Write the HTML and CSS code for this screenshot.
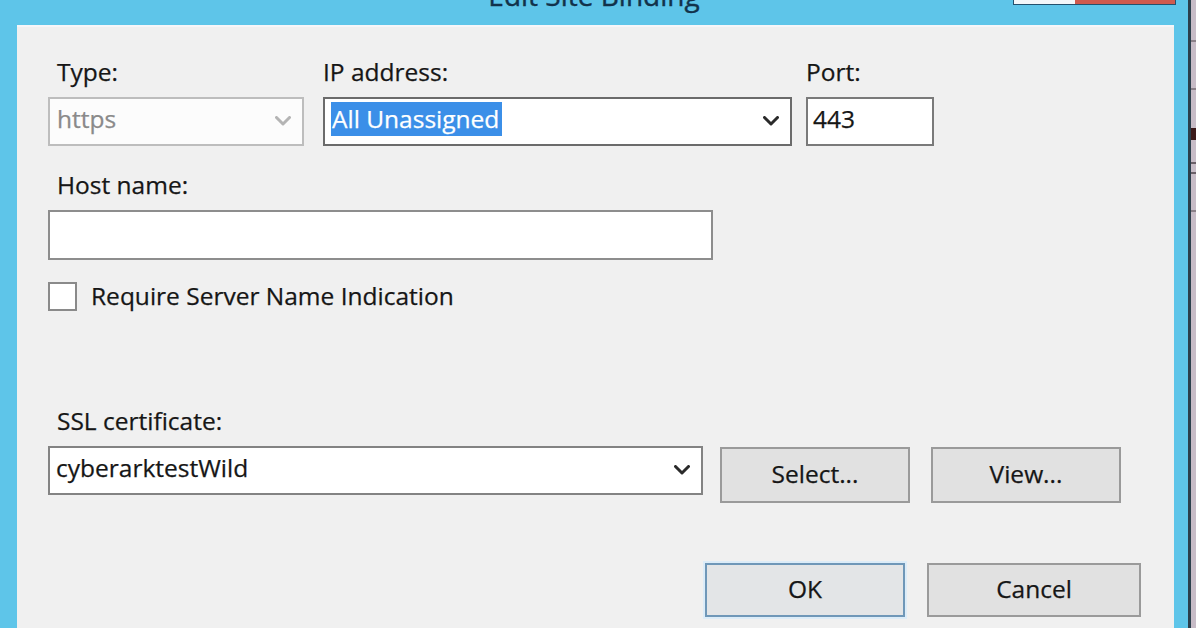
FILE: index.html
```html
<!DOCTYPE html>
<html lang="en">
<head>
<meta charset="utf-8">
<title>Edit Site Binding</title>
<link rel="stylesheet" href="styles.css">
</head>
<body>
<div class="screen">
  <div class="window">
    <div class="titlebar">
      <div class="tb-spacer"></div>
      <div class="title">Edit Site Binding</div>
      <div class="caption">
        <span class="cap-btn cap-max"></span>
        <span class="cap-btn cap-close"></span>
      </div>
    </div>
    <div class="frame-body">
      <div class="panel">
        <div class="row-top">
          <div class="field f-type">
            <div class="lbl indent">Type:</div>
            <div class="combo disabled">
              <span class="val">https</span>
              <svg class="chev" viewBox="0 0 16 10" width="16" height="10"><polyline points="1.5,1.5 8,8 14.5,1.5"/></svg>
            </div>
          </div>
          <div class="field f-ip">
            <div class="lbl">IP address:</div>
            <div class="combo focus">
              <span class="val"><span class="sel">All Unassigned</span></span>
              <svg class="chev" viewBox="0 0 16 10" width="16" height="10"><polyline points="1.5,1.5 8,8 14.5,1.5"/></svg>
            </div>
          </div>
          <div class="field f-port">
            <div class="lbl">Port:</div>
            <div class="textbox port"><span class="val">443</span></div>
          </div>
        </div>

        <div class="field f-host">
          <div class="lbl indent">Host name:</div>
          <div class="textbox host"></div>
        </div>

        <div class="check-row">
          <span class="checkbox"></span>
          <span class="check-label">Require Server Name Indication</span>
        </div>

        <div class="field f-ssl">
          <div class="lbl indent">SSL certificate:</div>
          <div class="ssl-row">
            <div class="combo ssl">
              <span class="val">cyberarktestWild</span>
              <svg class="chev" viewBox="0 0 16 10" width="16" height="10"><polyline points="1.5,1.5 8,8 14.5,1.5"/></svg>
            </div>
            <button class="btn btn-select">Select...</button>
            <button class="btn btn-view">View...</button>
          </div>
        </div>

        <div class="footer">
          <button class="btn btn-ok">OK</button>
          <button class="btn btn-cancel">Cancel</button>
        </div>
      </div>
    </div>
  </div>
  <div class="edge"></div>
  <div class="behind"></div>
</div>
</body>
</html>
```

FILE: styles.css
```css
* { box-sizing: border-box; }

html, body {
  margin: 0;
  padding: 0;
  width: 1196px;
  height: 628px;
  overflow: hidden;
  font-family: "Open Sans", "Noto Sans", sans-serif;
  font-size: 24.5px;
  color: #161616;
}

.screen {
  display: flex;
  width: 1196px;
  height: 628px;
}

.window {
  flex: 0 0 1188px;
  display: flex;
  flex-direction: column;
  background: #5ec5e9;
}

.titlebar {
  height: 25px;
  flex: 0 0 25px;
  overflow: hidden;
  display: grid;
  grid-template-columns: 1fr auto 1fr;
  align-items: start;
}

.title {
  font-size: 28px;
  line-height: 28px;
  margin-top: -19px;
  color: #12324b;
  -webkit-text-stroke: 0.4px #12324b;
  white-space: nowrap;
}

.caption {
  justify-self: end;
  margin-right: 12px;
  display: flex;
}

.cap-btn {
  display: block;
  height: 5px;
  border-bottom: 1px solid #24516e;
}

.cap-max {
  width: 62px;
  background: #f3f7fa;
  border-left: 1px solid #24516e;
}

.cap-close {
  width: 101px;
  background: #cf5a4e;
  border-right: 1px solid #24516e;
}

.frame-body {
  flex: 1;
  display: flex;
  padding: 0 14px 0 17px;
}

.panel {
  flex: 1;
  background: #f0f0f0;
  border-top: 2px solid #f6f6f9;
  padding: 30px 0 0 31px;
  display: flex;
  flex-direction: column;
  align-items: flex-start;
  -webkit-text-stroke: 0.25px currentColor;
}

.row-top {
  display: flex;
}

.field {
  display: flex;
  flex-direction: column;
}

.lbl {
  line-height: 30px;
  height: 30px;
  margin-bottom: 10px;
  white-space: nowrap;
}

.lbl.indent { padding-left: 9px; }

.f-type { width: 256px; }
.f-ip { width: 469px; margin-left: 19px; }
.f-port { width: 128px; margin-left: 14px; }

.combo, .textbox {
  height: 49px;
  background: #ffffff;
  border: 2px solid #858585;
  display: flex;
  align-items: center;
  padding: 0 11px 5px 7px;
  white-space: nowrap;
}

.val {
  flex: 1;
  line-height: 30px;
}

.chev {
  flex: 0 0 16px;
  margin-top: 4px;
  fill: none;
  stroke: #2a2a2a;
  stroke-width: 3;
  stroke-linecap: round;
  stroke-linejoin: round;
}

.combo.disabled {
  border-color: #bdbdbd;
  background: #fcfcfc;
}

.combo.disabled .val { color: #8a8a8a; }
.combo.disabled .chev { stroke: #b4b4b4; }

.combo.focus {
  border-color: #6b6b6b;
  padding-left: 6px;
}

.sel {
  display: inline-block;
  background: #3b8fe8;
  color: #ffffff;
  line-height: 34px;
  padding: 0 3px 0 1px;
}

.textbox.port {
  border-color: #7a7a7a;
  padding-left: 5px;
}

.f-host { margin-top: 24px; }

.textbox.host {
  width: 665px;
  height: 50px;
  border-color: #8d8d8d;
}

.check-row {
  margin-top: 21px;
  display: flex;
  align-items: center;
}

.checkbox {
  width: 29px;
  height: 29px;
  background: #ffffff;
  border: 2px solid #8a8a8a;
}

.check-label {
  margin-left: 14px;
  line-height: 30px;
}

.f-ssl { margin-top: 95px; }

.ssl-row {
  display: flex;
  align-items: flex-start;
}

.combo.ssl {
  width: 655px;
  border-color: #838383;
  padding-left: 6px;
}

.btn {
  font-family: inherit;
  font-size: 24.5px;
  color: #161616;
  -webkit-text-stroke: 0.25px #161616;
  background: #e1e1e1;
  border: 2px solid #9a9a9a;
  border-radius: 0;
  padding: 0 0 3px 0;
  line-height: 30px;
  margin: 0;
}

.btn-select {
  width: 190px;
  height: 56px;
  margin-left: 17px;
  margin-top: 1px;
}

.btn-view {
  width: 190px;
  height: 56px;
  margin-left: 21px;
  margin-top: 1px;
}

.footer {
  align-self: stretch;
  margin-top: 60px;
  display: flex;
  justify-content: flex-end;
  padding-right: 33px;
}

.btn-ok {
  width: 200px;
  height: 54px;
  border-color: #6f97b8;
  background: #e3e5e7;
  box-shadow: 0 0 0 2px #dcecf8;
}

.btn-cancel {
  width: 214px;
  height: 54px;
  margin-left: 22px;
}

.edge {
  flex: 0 0 3px;
  background: #2b3f4c;
}

.behind {
  flex: 1;
  background:
    linear-gradient(#c7bcc7 0 40px, #8a8088 40px 42px, #c7bcc7 42px 88px, #8a8088 88px 90px,
      #c7bcc7 90px 128px, #3b1a1a 128px 140px, #c7bcc7 140px 162px, #6a6068 162px 164px,
      #c7bcc7 164px 172px, #6a6068 172px 174px, #c7bcc7 174px 210px, #8a8088 210px 212px,
      #c7bcc7 212px 628px);
}
```
